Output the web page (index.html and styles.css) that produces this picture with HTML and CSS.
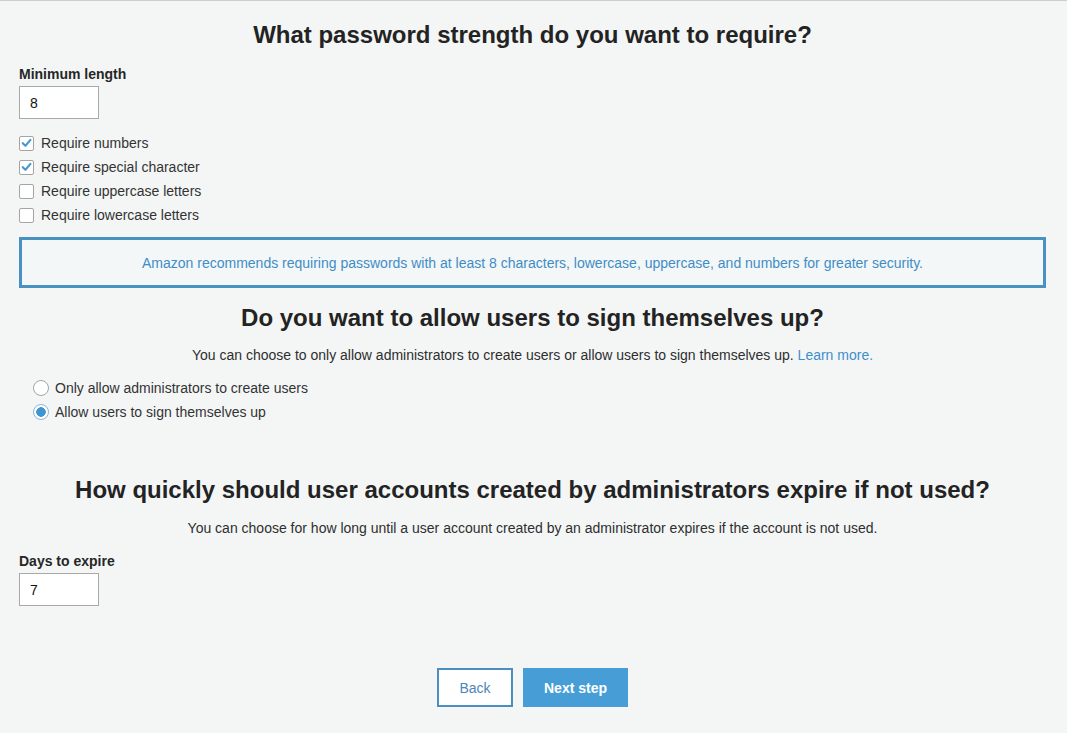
FILE: index.html
```html
<!DOCTYPE html>
<html lang="en">
<head>
<meta charset="utf-8">
<title>Policies</title>
<link rel="stylesheet" href="styles.css">
</head>
<body>
<main class="page">
  <h2 class="section-title first">What password strength do you want to require?</h2>

  <label class="field-label" for="min-length">Minimum length</label>
  <input class="text-input" id="min-length" type="text" value="8">

  <ul class="check-list">
    <li class="check-row"><span class="box checked"><svg viewBox="0 0 14 14" width="14" height="14"><path d="M3 7.2 L5.8 10 L11.2 3.6" fill="none" stroke="#3f95cf" stroke-width="2.2" stroke-linecap="round" stroke-linejoin="round"/></svg></span>Require numbers</li>
    <li class="check-row"><span class="box checked"><svg viewBox="0 0 14 14" width="14" height="14"><path d="M3 7.2 L5.8 10 L11.2 3.6" fill="none" stroke="#3f95cf" stroke-width="2.2" stroke-linecap="round" stroke-linejoin="round"/></svg></span>Require special character</li>
    <li class="check-row"><span class="box"></span>Require uppercase letters</li>
    <li class="check-row"><span class="box"></span>Require lowercase letters</li>
  </ul>

  <div class="notice">Amazon recommends requiring passwords with at least 8 characters, lowercase, uppercase, and numbers for greater security.</div>

  <h2 class="section-title signup">Do you want to allow users to sign themselves up?</h2>
  <p class="section-desc">You can choose to only allow administrators to create users or allow users to sign themselves up. <a class="link" href="#">Learn more.</a></p>

  <ul class="radio-list">
    <li class="radio-row"><span class="radio"></span>Only allow administrators to create users</li>
    <li class="radio-row"><span class="radio selected"></span>Allow users to sign themselves up</li>
  </ul>

  <h2 class="section-title expire">How quickly should user accounts created by administrators expire if not used?</h2>
  <p class="section-desc tight">You can choose for how long until a user account created by an administrator expires if the account is not used.</p>

  <label class="field-label days" for="days">Days to expire</label>
  <input class="text-input" id="days" type="text" value="7">

  <div class="actions">
    <button class="btn btn-secondary" type="button">Back</button>
    <button class="btn btn-primary" type="button">Next step</button>
  </div>
</main>
</body>
</html>
```

FILE: styles.css
```css
html, body {
  margin: 0;
  padding: 0;
  background: #f4f6f6;
}

body {
  font-family: "Liberation Sans", Arial, Helvetica, sans-serif;
  color: #333;
  font-size: 14px;
}

.page {
  border-top: 1px solid #cdcdcd;
  padding: 0 21px 40px 19px;
  min-height: 690px;
  display: flex;
  flex-direction: column;
  align-items: flex-start;
}

.section-title {
  align-self: stretch;
  margin: 0;
  text-align: center;
  font-size: 24px;
  line-height: 28px;
  font-weight: 700;
  color: #232323;
}

.section-title.first { margin-top: 20px; }
.section-title.signup { margin-top: 16px; }
.section-title.expire { margin-top: 52px; }

.field-label {
  display: block;
  margin-top: 17px;
  font-size: 14px;
  line-height: 16px;
  font-weight: 700;
  color: #262626;
}

.field-label.days { margin-top: 16px; }

.text-input {
  box-sizing: border-box;
  width: 80px;
  height: 33px;
  margin: 4px 0 0;
  padding: 0 10px;
  border: 1px solid #a9a9a9;
  background: #fff;
  font-family: "Liberation Sans", Arial, sans-serif;
  font-size: 14px;
  color: #111;
  outline: none;
}

.check-list,
.radio-list {
  list-style: none;
  margin: 12px 0 0;
  padding: 0;
}

.check-row,
.radio-row {
  display: flex;
  align-items: center;
  height: 24px;
  font-size: 14px;
  color: #333;
}

.box {
  box-sizing: border-box;
  width: 15px;
  height: 15px;
  margin-right: 7px;
  border: 1px solid #a4a4a4;
  border-radius: 2px;
  background: #fff;
  display: flex;
  align-items: center;
  justify-content: center;
}

.box svg { display: block; }

.notice {
  box-sizing: border-box;
  align-self: stretch;
  margin-top: 10px;
  height: 51px;
  border: 3px solid #4a91c3;
  background: #f3f7f8;
  color: #3f8dc6;
  font-size: 14px;
  display: flex;
  align-items: center;
  justify-content: center;
}

.section-desc {
  align-self: stretch;
  margin: 14px 0 0;
  text-align: center;
  font-size: 14px;
  line-height: 18px;
  color: #2e2e2e;
}

.section-desc.tight { margin-top: 15px; }

.link {
  color: #3d8fcb;
  text-decoration: none;
}

.radio-list {
  padding-left: 14px;
}

.radio {
  box-sizing: border-box;
  width: 16px;
  height: 16px;
  margin-right: 6px;
  border: 1px solid #a4a4a4;
  border-radius: 50%;
  background: #fff;
}

.radio.selected {
  background: radial-gradient(circle, #3f95d3 0 4.5px, #fff 5px);
  border-color: #8db6d6;
}

.actions {
  align-self: stretch;
  display: flex;
  justify-content: center;
  gap: 10px;
  margin-top: 62px;
}

.btn {
  box-sizing: border-box;
  height: 39px;
  font-family: "Liberation Sans", Arial, sans-serif;
  font-size: 14px;
  cursor: pointer;
}

.btn-secondary {
  width: 76px;
  border: 2px solid #4a8fc0;
  background: #fff;
  color: #4b86b7;
}

.btn-primary {
  width: 105px;
  border: none;
  background: #479ed7;
  color: #fff;
  font-weight: 700;
}
```
